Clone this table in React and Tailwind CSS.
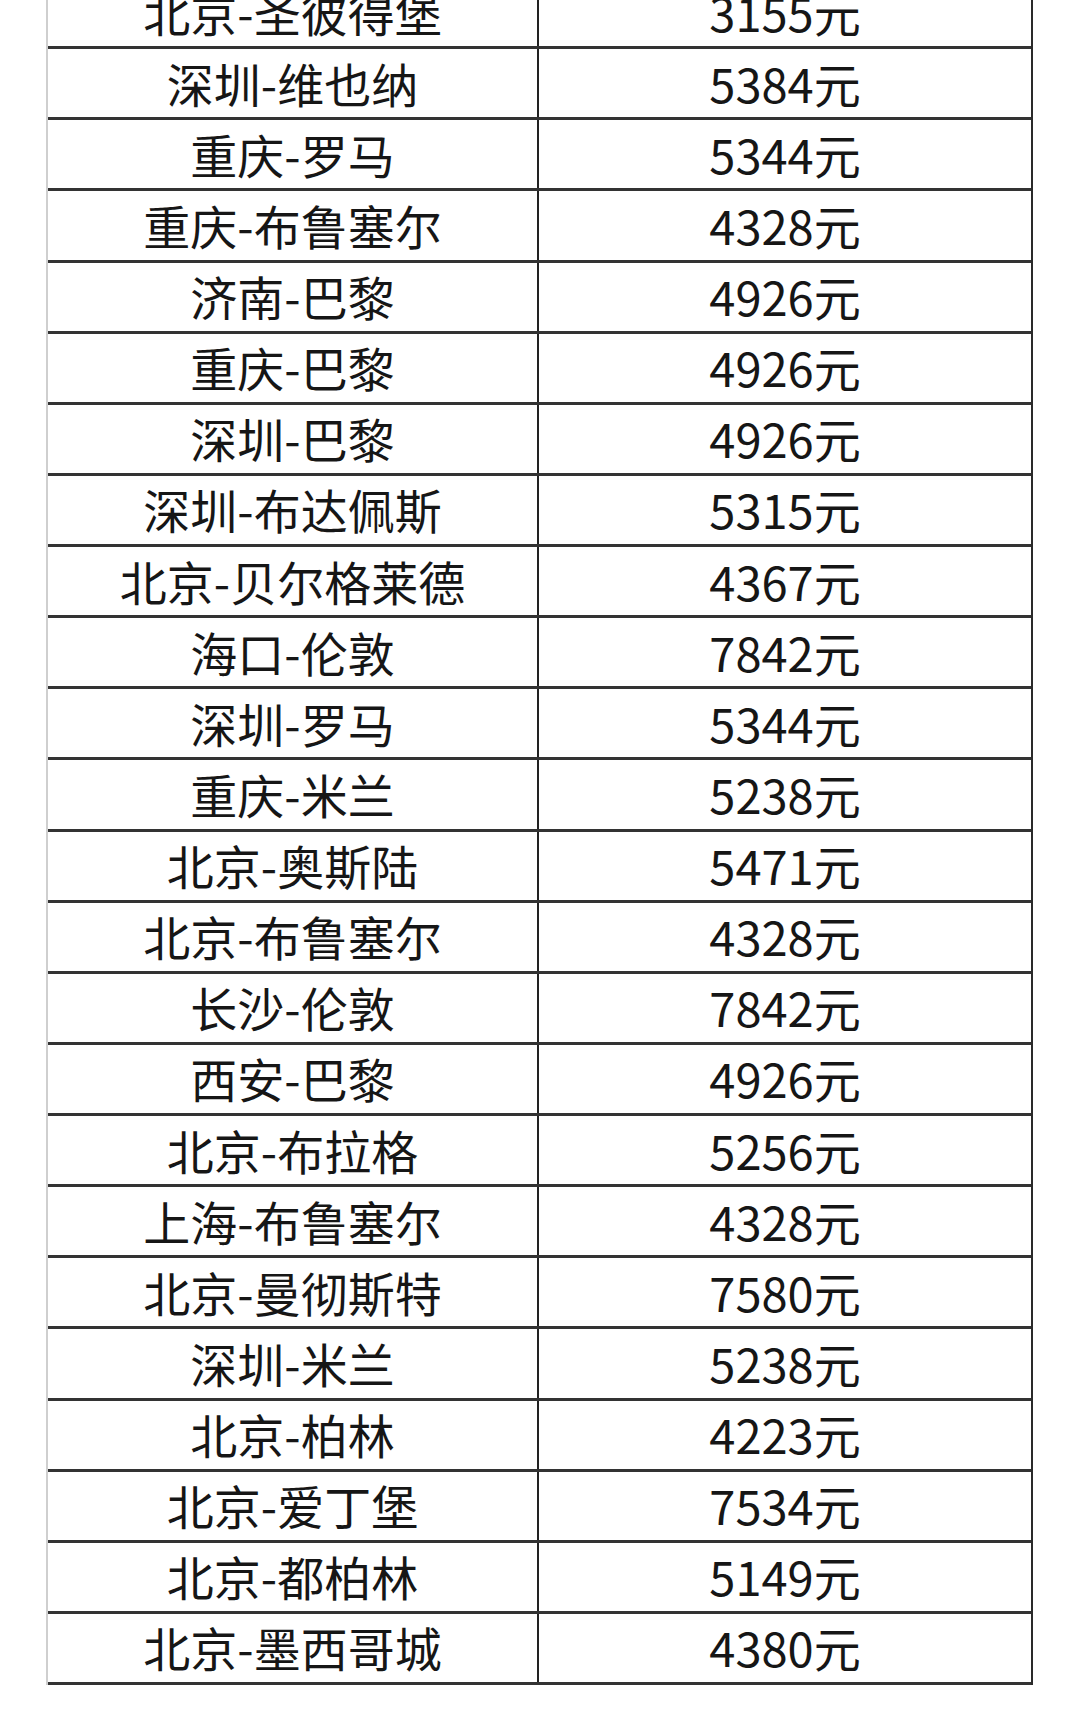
import React from "react";

const rows = [
    ["北京-圣彼得堡", "3155元"],
    ["深圳-维也纳", "5384元"],
    ["重庆-罗马", "5344元"],
    ["重庆-布鲁塞尔", "4328元"],
    ["济南-巴黎", "4926元"],
    ["重庆-巴黎", "4926元"],
    ["深圳-巴黎", "4926元"],
    ["深圳-布达佩斯", "5315元"],
    ["北京-贝尔格莱德", "4367元"],
    ["海口-伦敦", "7842元"],
    ["深圳-罗马", "5344元"],
    ["重庆-米兰", "5238元"],
    ["北京-奥斯陆", "5471元"],
    ["北京-布鲁塞尔", "4328元"],
    ["长沙-伦敦", "7842元"],
    ["西安-巴黎", "4926元"],
    ["北京-布拉格", "5256元"],
    ["上海-布鲁塞尔", "4328元"],
    ["北京-曼彻斯特", "7580元"],
    ["深圳-米兰", "5238元"],
    ["北京-柏林", "4223元"],
    ["北京-爱丁堡", "7534元"],
    ["北京-都柏林", "5149元"],
    ["北京-墨西哥城", "4380元"],
];

function PriceRow({ route, price }) {
    return (
        <div className="flex h-[71.13px] border-b-[3px] border-[#333]">
            <div className="flex w-[491px] items-center justify-center border-r-2 border-[#222] pb-[2px]">
                {route}
            </div>
            <div className="flex flex-1 items-center justify-center pb-[2px]">{price}</div>
        </div>
    );
}

export default function App() {
    return (
        <div
            className="h-[1719px] w-[1080px] overflow-hidden bg-white text-[47px] leading-none text-[#161616]"
            style={{ fontFamily: '"Noto Sans CJK SC", "Noto Sans", sans-serif' }}
        >
            <div className="-mt-[22px] ml-[46px] w-[987px] border-l-2 border-r-2 border-l-[#cfcfcf] border-r-[#2a2a2a]">
                {rows.map((r, i) => (
                    <PriceRow key={i} route={r[0]} price={r[1]} />
                ))}
            </div>
        </div>
    );
}
